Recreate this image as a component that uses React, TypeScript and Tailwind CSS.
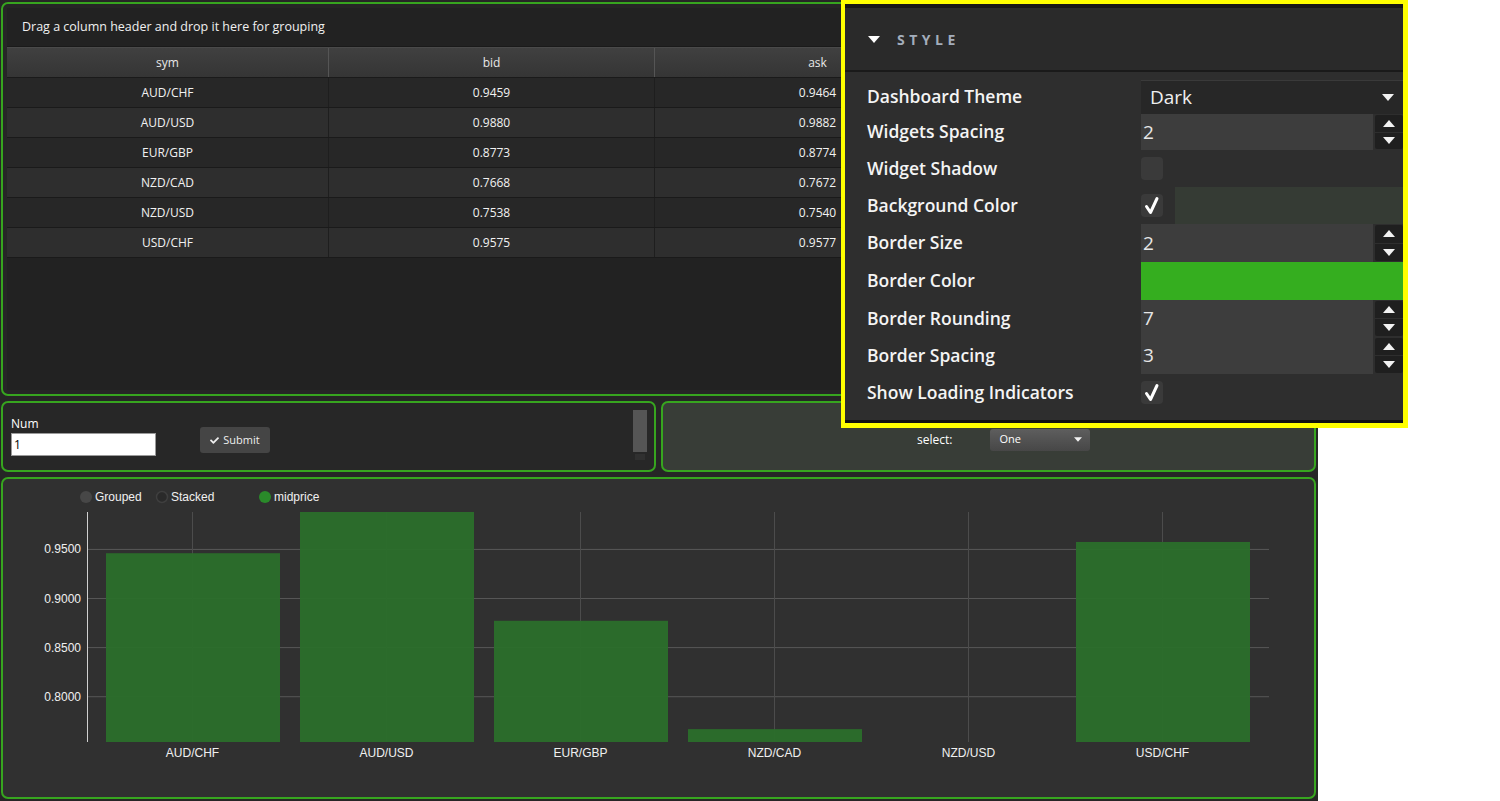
import { FaCheck } from "react-icons/fa";

const rows = [
  { sym: "AUD/CHF", bid: "0.9459", ask: "0.9464", mid: 0.94615 },
  { sym: "AUD/USD", bid: "0.9880", ask: "0.9882", mid: 0.9881 },
  { sym: "EUR/GBP", bid: "0.8773", ask: "0.8774", mid: 0.87735 },
  { sym: "NZD/CAD", bid: "0.7668", ask: "0.7672", mid: 0.767 },
  { sym: "NZD/USD", bid: "0.7538", ask: "0.7540", mid: 0.7539 },
  { sym: "USD/CHF", bid: "0.9575", ask: "0.9577", mid: 0.9576 },
];

const MIN = 0.7539;
const MAX = 0.9881;
const yOf = (v: number) => 742 - ((v - MIN) / (MAX - MIN)) * 230;

function TriUp() {
  return (
    <svg width="12" height="7" viewBox="0 0 12 7">
      <path d="M6 0 L12 7 L0 7 Z" fill="#f2f2f2" />
    </svg>
  );
}

function TriDown({ w = 12, h = 7, color = "#f2f2f2" }: { w?: number; h?: number; color?: string }) {
  return (
    <svg width={w} height={h} viewBox="0 0 12 7">
      <path d="M0 0 L12 0 L6 7 Z" fill={color} />
    </svg>
  );
}

function Tick() {
  return (
    <svg width="20" height="20" viewBox="0 0 20 20">
      <path d="M4.5 10.5 L8.5 16.5 L15 2.5" stroke="#fff" strokeWidth="3" fill="none" strokeLinecap="round" strokeLinejoin="round" />
    </svg>
  );
}

function DataTable() {
  // 4th column sits under the style overlay, so its cells stay blank
  const cols = "grid grid-cols-[322px_326px_326px_1fr]";
  return (
    <div className="h-[394px] rounded-[7px] border-2 border-[#37a51f] bg-[#262626] p-[4px]">
      <div className="h-full bg-[#222222] flex flex-col">
        <div className="h-[39px] shrink-0 flex items-center pl-[15px] text-[12.5px] text-[#f0f0f0] border-b border-[#1a1a1a]">
          Drag a column header and drop it here for grouping
        </div>
        <div className={`${cols} h-[30px] bg-gradient-to-b from-[#404040] to-[#353535] border-t border-[#4a4a4a]`}>
          {["sym", "bid", "ask", ""].map((h, j) => (
            <div key={j} className="flex items-center justify-center text-[12px] text-[#e8e8e8] border-r border-[#555555]">
              {h}
            </div>
          ))}
        </div>
        {rows.map((r, i) => (
          <div
            key={r.sym}
            className={`${cols} h-[30px] border-t border-[#1a1a1a] ${i % 2 === 0 ? "bg-[#272727]" : "bg-[#2e2e2e]"}`}
          >
            {[r.sym, r.bid, r.ask, ""].map((c, j) => (
              <div key={j} className="flex items-center justify-center text-[12px] text-[#f2f2f2] border-r border-[#1e1e1e]">
                {c}
              </div>
            ))}
          </div>
        ))}
        <div className="border-t border-[#1a1a1a]" />
      </div>
    </div>
  );
}

function FormWidget() {
  return (
    <div className="w-[655px] h-full rounded-[7px] border-2 border-[#37a51f] bg-[#272727] flex">
      <div className="pl-[8px] pt-[14px] flex flex-col">
        <span className="text-[12px] leading-[14px] text-white">Num</span>
        <div className="mt-[2px] w-[145px] h-[23px] bg-white border border-[#9a9a9a] flex items-center pl-[2px] text-[12px] text-black">
          1
        </div>
      </div>
      <div className="ml-[44px] mt-[24px]">
        <div className="w-[70px] h-[26px] rounded-[3px] bg-[#454545] flex items-center justify-center gap-[4px] text-[11px] text-[#eeeeee]">
          <FaCheck size={9} />
          Submit
        </div>
      </div>
      <div className="ml-auto mr-[7px] mt-[7px] flex flex-col">
        <div className="w-[14px] h-[42px] bg-[#555555]" />
        <div className="w-[10px] h-[6px] mx-auto mt-[2px] bg-[#303030]" />
      </div>
    </div>
  );
}

function SelectWidget() {
  return (
    <div className="flex-1 h-full rounded-[7px] border-2 border-[#37a51f] bg-[#383d37] flex items-center pt-[6px]">
      <span className="ml-[254px] text-[12px] text-white">select:</span>
      <div className="ml-[38px] w-[100px] h-[22px] rounded-[3px] bg-gradient-to-b from-[#5e5e5e] to-[#474747] flex items-center pl-[9px] pr-[8px] text-[11px] text-white">
        One
        <span className="ml-auto">
          <TriDown w={8} h={5} />
        </span>
      </div>
    </div>
  );
}

function ChartWidget() {
  const font = "'Liberation Sans', Arial, sans-serif";
  return (
    <div className="h-[322px] rounded-[7px] border-2 border-[#37a51f] bg-[#303030] overflow-hidden">
      <svg width="1312" height="318">
        <g transform="translate(-3,-479)" fontFamily={font} fontSize="12" fill="#f0f0f0">
          <circle cx="86" cy="497" r="6" fill="#474747" />
          <text x="95" y="501">Grouped</text>
          <circle cx="162" cy="497" r="5.5" fill="#2a2a2a" stroke="#3f3f3f" strokeWidth="1.5" />
          <text x="171" y="501">Stacked</text>
          <circle cx="265" cy="497" r="6" fill="#2a8a2a" />
          <text x="274" y="501">midprice</text>

          {[0.95, 0.9, 0.85, 0.8].map((v) => (
            <g key={v}>
              <line x1="87" x2="1269" y1={yOf(v)} y2={yOf(v)} stroke="#585858" strokeWidth="1" />
              <text x="81" y={yOf(v) + 4} textAnchor="end">
                {v.toFixed(4)}
              </text>
            </g>
          ))}
          {rows.map((r, i) => (
            <line key={r.sym} x1={192.5 + i * 194} x2={192.5 + i * 194} y1="512" y2="742" stroke="#4c4c4c" strokeWidth="1" />
          ))}
          {rows.map((r, i) => (
            <rect
              key={r.sym}
              x={106 + i * 194}
              y={yOf(r.mid)}
              width="174"
              height={742 - yOf(r.mid)}
              fill="#2b6e2b"
              fillOpacity="0.94"
            />
          ))}
          {rows.map((r, i) => (
            <text key={r.sym} x={192.5 + i * 194} y="757" textAnchor="middle">
              {r.sym}
            </text>
          ))}
          <line x1="87.5" x2="87.5" y1="512" y2="742" stroke="#d0d0d0" strokeWidth="1" />
        </g>
      </svg>
    </div>
  );
}

function NumberInput({ value }: { value: string }) {
  return (
    <div className="flex h-full w-full">
      <div className="flex-1 bg-[#3d3d3d] flex items-center pl-[2px] text-[19px] leading-none text-[#e6e6e6]">{value}</div>
      <div className="w-[28px] ml-[2px] flex flex-col gap-[1px] py-[1px]">
        <div className="flex-1 bg-[#1f1f1f] rounded-t-[2px] flex items-center justify-center">
          <TriUp />
        </div>
        <div className="flex-1 bg-[#1f1f1f] rounded-b-[2px] flex items-center justify-center">
          <TriDown />
        </div>
      </div>
    </div>
  );
}

function Checkbox({ checked }: { checked: boolean }) {
  return (
    <div className="w-[22px] h-[23px] rounded-[4px] bg-[#3a3a3a] flex items-center justify-center">
      {checked && <Tick />}
    </div>
  );
}

function StylePanel() {
  const items: { label: string; h: number; control: React.ReactNode }[] = [
    {
      label: "Dashboard Theme",
      h: 34,
      control: (
        <div className="h-full w-full bg-[#272727] border-t border-[#3a3a3a] flex items-center pl-[9px] pr-[9px] text-[19px] leading-none text-[#f0f0f0]">
          Dark
          <span className="ml-auto">
            <TriDown w={12} h={11} />
          </span>
        </div>
      ),
    },
    { label: "Widgets Spacing", h: 36, control: <NumberInput value="2" /> },
    {
      label: "Widget Shadow",
      h: 37,
      control: (
        <div className="h-full flex items-center">
          <Checkbox checked={false} />
        </div>
      ),
    },
    {
      label: "Background Color",
      h: 37,
      control: (
        <div className="h-full flex items-center">
          <Checkbox checked />
          <div className="ml-[12px] flex-1 h-full bg-[#353b34]" />
        </div>
      ),
    },
    { label: "Border Size", h: 38, control: <NumberInput value="2" /> },
    { label: "Border Color", h: 38, control: <div className="h-full w-full bg-[#35ae1f]" /> },
    { label: "Border Rounding", h: 37, control: <NumberInput value="7" /> },
    { label: "Border Spacing", h: 37, control: <NumberInput value="3" /> },
    {
      label: "Show Loading Indicators",
      h: 37,
      control: (
        <div className="h-full flex items-center">
          <Checkbox checked />
        </div>
      ),
    },
  ];

  return (
    <div className="absolute left-[841px] top-0 w-[567px] h-[428px] border-[4px] border-b-[5px] border-r-[5px] border-[#ffff00] bg-[#2d2d2d] flex flex-col">
      <div className="h-[4px] bg-[#161616]" />
      <div className="h-[62px] bg-[#2a2a2a] flex items-center pl-[23px] gap-[17px]">
        <TriDown w={12} h={7} color="#ffffff" />
        <span className="text-[14px] font-bold tracking-[0.32em] text-[#a3adbb]">STYLE</span>
      </div>
      <div className="h-[2px] bg-[#1a1a1a]" />
      <div className="flex-1 bg-[#2e2e2e] pt-[8px] flex flex-col">
        {items.map((it) => (
          <div key={it.label} className="flex" style={{ height: it.h }}>
            <div className="w-[296px] pl-[22px] flex items-center text-[17.5px] leading-none font-semibold text-[#f4f4f4]">
              {it.label}
            </div>
            <div className="flex-1">{it.control}</div>
          </div>
        ))}
      </div>
      <div className="h-[3px] bg-[#111111]" />
    </div>
  );
}

export default function App() {
  return (
    <div
      className="w-[1500px] h-[801px] bg-white relative overflow-hidden"
      style={{ fontFamily: "'Open Sans', 'Noto Sans', sans-serif" }}
    >
      <div className="w-[1318px] h-[801px] bg-[#262626] pt-[2px] pl-[1px] pr-[2px] flex flex-col gap-[5px]">
        <DataTable />
        <div className="h-[71px] flex gap-[5px]">
          <FormWidget />
          <SelectWidget />
        </div>
        <ChartWidget />
      </div>
      <StylePanel />
    </div>
  );
}
